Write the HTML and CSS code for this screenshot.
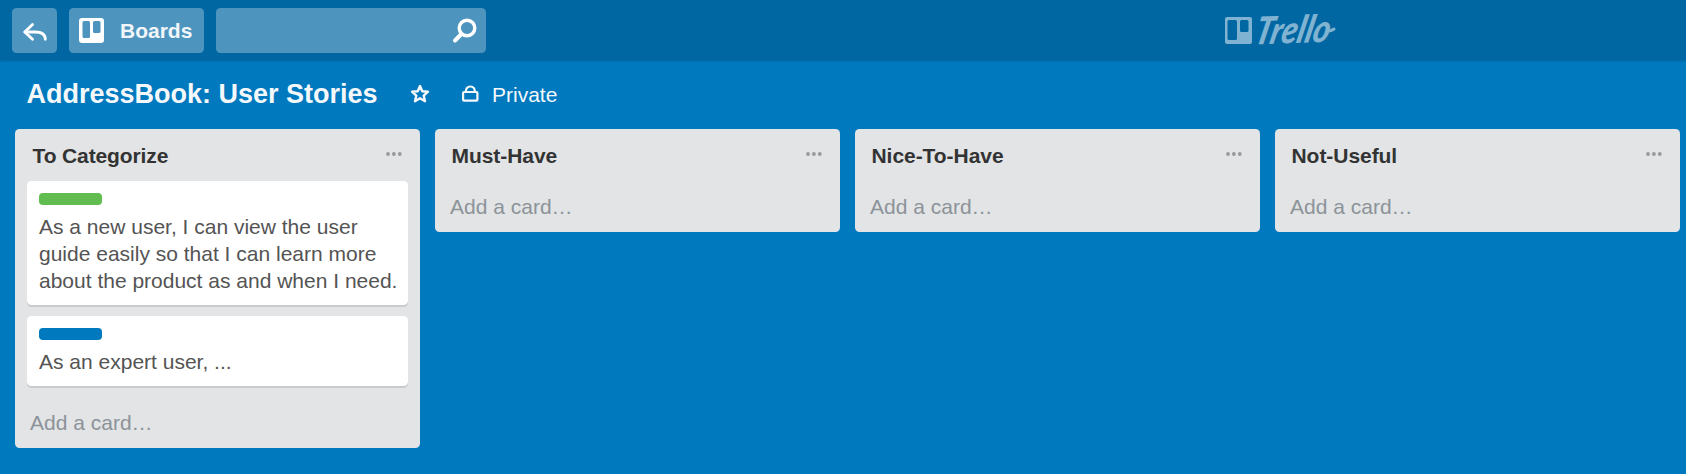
FILE: index.html
```html
<!DOCTYPE html>
<html lang="en">
<head>
<meta charset="utf-8">
<title>AddressBook: User Stories</title>
<link rel="stylesheet" href="styles.css">
</head>
<body>
<header class="topbar">
  <a class="btn back" aria-label="Back">
    <svg width="24" height="18" viewBox="0 0 24 18" fill="none" stroke="#fff" stroke-width="2.800" stroke-linecap="round" stroke-linejoin="round"><path d="M9.500 1.500 1.800 9l7.700 7.300"/><path d="M2 9h10c6 0 10.300 2 10.300 7.300"/></svg>
  </a>
  <a class="btn boards">
    <svg width="25" height="25" viewBox="0 0 25 25"><path fill="#fff" fill-rule="evenodd" d="M3 0h19a3 3 0 0 1 3 3v19a3 3 0 0 1-3 3H3a3 3 0 0 1-3-3V3a3 3 0 0 1 3-3ZM5 3a1.500 1.500 0 0 0-1.500 1.500v14A1.500 1.500 0 0 0 5 20h4.500a1.500 1.500 0 0 0 1.500-1.500v-14A1.500 1.500 0 0 0 9.500 3ZM15.500 3A1.500 1.500 0 0 0 14 4.500v9a1.500 1.500 0 0 0 1.500 1.500h4.500a1.500 1.500 0 0 0 1.500-1.500v-9A1.500 1.500 0 0 0 20 3Z"/></svg>
    <span>Boards</span>
  </a>
  <div class="btn search">
    <svg width="26" height="26" viewBox="0 0 26 26" fill="none" stroke="#fff" stroke-linecap="round"><circle cx="15" cy="10" r="7.800" stroke-width="3.400"/><path d="M9 16.500 3 22.500" stroke-width="4"/></svg>
  </div>
  <div class="logo">
    <svg width="27" height="27" viewBox="0 0 27 27"><path fill="currentColor" fill-rule="evenodd" d="M2 0h23a2 2 0 0 1 2 2v23a2 2 0 0 1-2 2H2a2 2 0 0 1-2-2V2a2 2 0 0 1 2-2ZM4 3a1.500 1.500 0 0 0-1.500 1.500v17A1.500 1.500 0 0 0 4 23h6.500a1.500 1.500 0 0 0 1.500-1.500v-17A1.500 1.500 0 0 0 10.500 3ZM16.500 3A1.500 1.500 0 0 0 15 4.500v9a1.500 1.500 0 0 0 1.500 1.500H22a1.500 1.500 0 0 0 1.500-1.500v-9A1.500 1.500 0 0 0 22 3Z"/></svg>
    <svg class="wordmark" width="82" height="36" viewBox="0 0 82 36"><text x="0" y="0" textLength="75" lengthAdjust="spacingAndGlyphs" transform="translate(-2 32.500) rotate(-2) skewX(-15)">Trello</text><path d="M72 19c3 .5 5-.5 7-2"/></svg>
  </div>
</header>
<div class="board-head">
  <h1>AddressBook: User Stories</h1>
  <svg class="star" width="20" height="19" viewBox="0 0 20 19" fill="none" stroke="#f4f8fb" stroke-width="2.400" stroke-linejoin="round"><path d="m10 2 2.300 5.200 5.700.5-4.300 3.900 1.300 5.600-5-2.900-5 2.900 1.300-5.600L2 7.700l5.700-.5Z"/></svg>
  <svg class="lock" width="18" height="18" viewBox="0 0 18 18" fill="none" stroke="#f4f8fb" stroke-width="2.200"><rect x="2.100" y="7" width="14.300" height="8.700" rx="1"/><path d="M4.700 7C4.700 3.700 6.500 1.500 9.300 1.500s4.600 2.200 4.600 5.500"/></svg>
  <span class="private">Private</span>
</div>
<main class="lists">
  <section class="list">
    <div class="list-head"><h2 class="first">To Categorize</h2><svg class="dots" width="16" height="4" viewBox="0 0 16 4"><circle cx="2" cy="2" r="1.900"/><circle cx="7.900" cy="2" r="1.900"/><circle cx="13.800" cy="2" r="1.900"/></svg></div>
    <article class="card"><div class="label green"></div><p>As a new user, I can view the user guide easily so that I can learn more about the product as and when I need.</p></article>
    <article class="card"><div class="label blue"></div><p>As an expert user, ...</p></article>
    <a class="add">Add a card…</a>
  </section>
  <section class="list">
    <div class="list-head"><h2>Must-Have</h2><svg class="dots" width="16" height="4" viewBox="0 0 16 4"><circle cx="2" cy="2" r="1.900"/><circle cx="7.900" cy="2" r="1.900"/><circle cx="13.800" cy="2" r="1.900"/></svg></div>
    <a class="add">Add a card…</a>
  </section>
  <section class="list">
    <div class="list-head"><h2>Nice-To-Have</h2><svg class="dots" width="16" height="4" viewBox="0 0 16 4"><circle cx="2" cy="2" r="1.900"/><circle cx="7.900" cy="2" r="1.900"/><circle cx="13.800" cy="2" r="1.900"/></svg></div>
    <a class="add">Add a card…</a>
  </section>
  <section class="list">
    <div class="list-head"><h2>Not-Useful</h2><svg class="dots" width="16" height="4" viewBox="0 0 16 4"><circle cx="2" cy="2" r="1.900"/><circle cx="7.900" cy="2" r="1.900"/><circle cx="13.800" cy="2" r="1.900"/></svg></div>
    <a class="add">Add a card…</a>
  </section>
</main>
</body>
</html>
```

FILE: styles.css
```css
* { box-sizing: border-box; }
body {
  margin: 0;
  height: 474px;
  overflow: hidden;
  background: #0079bf;
  font: 21px/27px "Liberation Sans", Arial, sans-serif;
  color: #545454;
}
h1, h2, p { margin: 0; }
svg { display: block; flex: none; }

.topbar {
  display: flex;
  height: 60px;
  padding: 8px 12px 0;
  gap: 12px;
  background: #0067a3;
  box-shadow: 0 1px 2px rgba(0, 60, 100, .35);
}
.btn {
  display: flex;
  align-items: center;
  height: 45px;
  border-radius: 4.5px;
  background: #4d95bf;
  color: #f2f6f9;
  font-weight: bold;
}
.back { width: 45px; padding: 3px 0 0 11px; }
.boards { width: 135px; padding-left: 10px; gap: 16px; }
.search { width: 270px; justify-content: flex-end; padding-right: 8px; }
.logo {
  display: flex;
  align-items: flex-start;
  margin-left: 727px;
  padding-top: 9px;
  gap: 3px;
  color: #80b3d1;
}
.wordmark {
  margin-top: -5px;
  overflow: visible;
  font: italic 900 38px Lato, sans-serif;
  fill: currentColor;
}
.wordmark path {
  fill: none;
  stroke: currentColor;
  stroke-width: 3;
  stroke-linecap: round;
}

.board-head {
  display: flex;
  height: 69px;
  padding: 20px 0 0 26.5px;
  color: #f4f8fb;
}
h1 { width: 351px; padding-top: 1px; font-size: 27px; line-height: 27px; white-space: nowrap; }
.star { margin: 4px 0 0 32px; }
.lock { margin: 5px 0 0 31.5px; }
.private { margin: 1px 0 0 13px; }

.lists {
  display: flex;
  align-items: flex-start;
  gap: 15px;
  padding-left: 15px;
}
.list {
  flex: none;
  width: 405px;
  padding: 0 12px;
  border-radius: 4.5px;
  background: #e2e4e6;
}
.list-head {
  display: flex;
  justify-content: space-between;
  height: 52px;
  padding: 13px 6px 0 4.5px;
}
h2 { font-size: 21px; line-height: 27px; letter-spacing: -.05px; color: #333; }
.first { padding-left: 1px; letter-spacing: -.12px; }
.dots { margin-top: 10px; fill: #999; }
.card {
  margin-bottom: 11px;
  padding: 12px 0 11px 12px;
  border-radius: 4.5px;
  background: #fff;
  box-shadow: 0 2px 0 #c9cccd;
}
.card p { padding-top: 8px; }
.label { width: 63px; height: 12px; border-radius: 4px; }
.green { background: #61bd4f; }
.blue { background: #0079bf; }
.add {
  display: block;
  height: 51px;
  padding: 12px 0 0 3px;
  color: #8c9399;
}
```
